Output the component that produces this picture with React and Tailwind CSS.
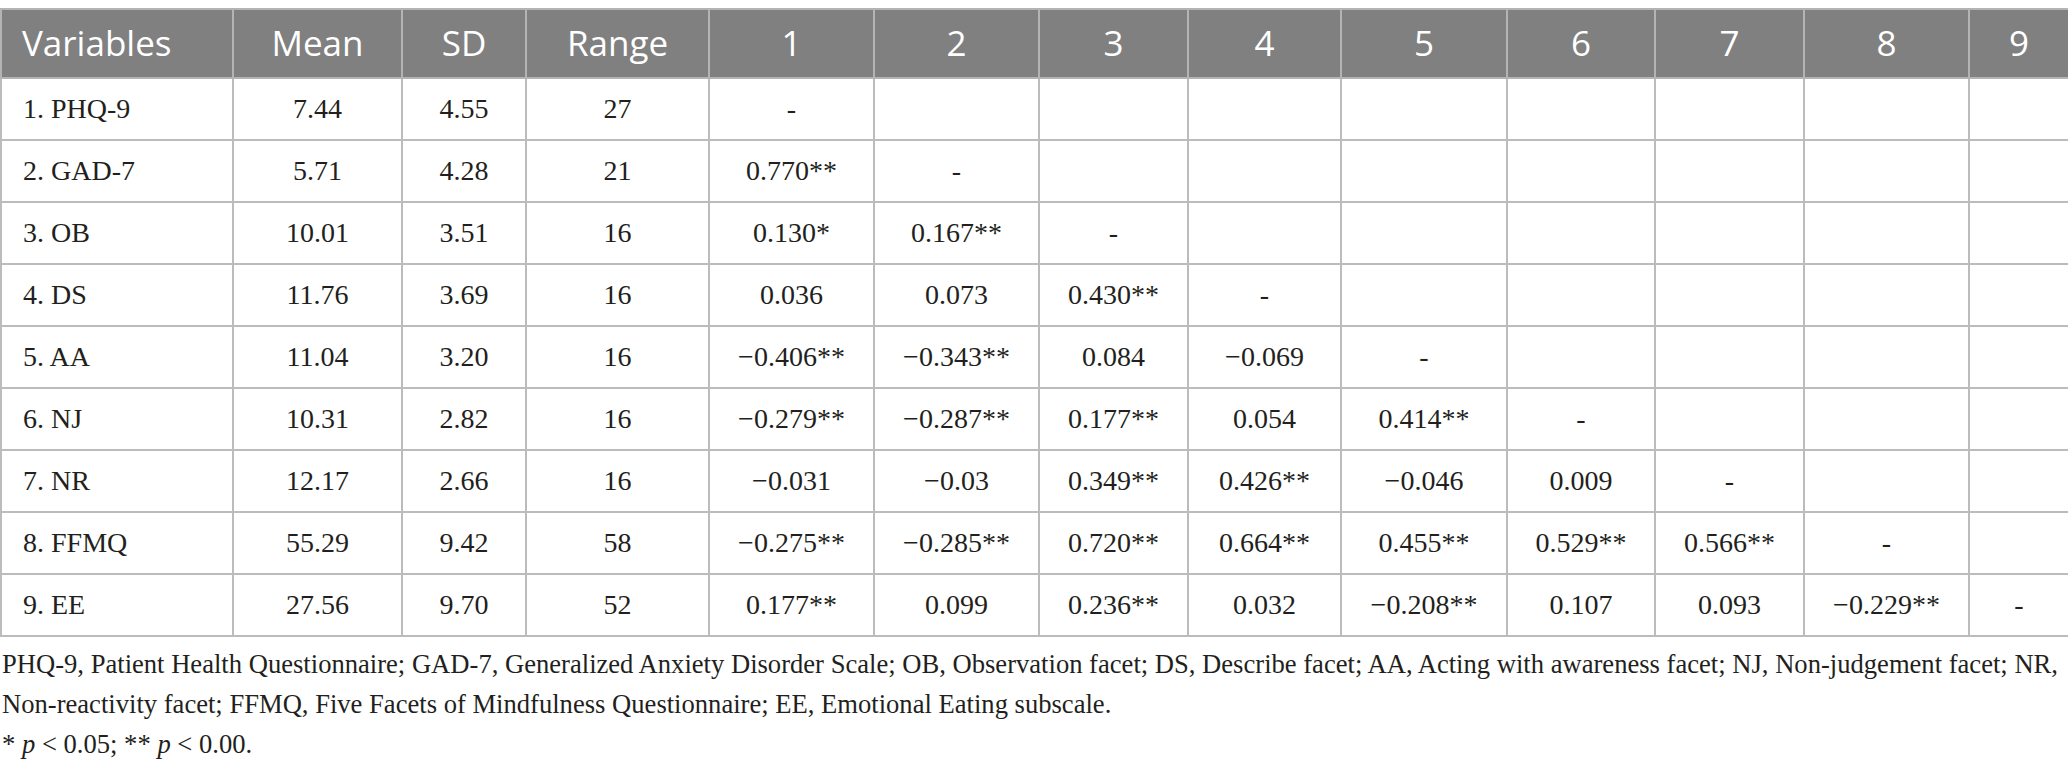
import React from 'react';

const cols = [232, 169, 124, 183, 165, 165, 149, 153, 166, 148, 149, 165, 100];
const heads = ['Variables', 'Mean', 'SD', 'Range', '1', '2', '3', '4', '5', '6', '7', '8', '9'];

const rows = [
  ['1. PHQ-9', '7.44', '4.55', '27', '-'],
  ['2. GAD-7', '5.71', '4.28', '21', '0.770**', '-'],
  ['3. OB', '10.01', '3.51', '16', '0.130*', '0.167**', '-'],
  ['4. DS', '11.76', '3.69', '16', '0.036', '0.073', '0.430**', '-'],
  ['5. AA', '11.04', '3.20', '16', '\u22120.406**', '\u22120.343**', '0.084', '\u22120.069', '-'],
  ['6. NJ', '10.31', '2.82', '16', '\u22120.279**', '\u22120.287**', '0.177**', '0.054', '0.414**', '-'],
  ['7. NR', '12.17', '2.66', '16', '\u22120.031', '\u22120.03', '0.349**', '0.426**', '\u22120.046', '0.009', '-'],
  ['8. FFMQ', '55.29', '9.42', '58', '\u22120.275**', '\u22120.285**', '0.720**', '0.664**', '0.455**', '0.529**', '0.566**', '-'],
  ['9. EE', '27.56', '9.70', '52', '0.177**', '0.099', '0.236**', '0.032', '\u22120.208**', '0.107', '0.093', '\u22120.229**', '-'],
];

export default function App() {
  return (
    <div className="w-[2068px] h-[768px] bg-white pt-[8px] overflow-hidden">
      <table className="w-[2068px] table-fixed border-collapse">
        <colgroup>
          {cols.map((w, i) => (
            <col key={i} style={{ width: w }} />
          ))}
        </colgroup>
        <thead>
          <tr className="h-[69px] bg-[#7f807f]">
            {heads.map((h, i) => (
              <th
                key={h}
                className={`border-2 border-[#b4b4b4] font-normal text-white text-[35px] font-['Open_Sans',sans-serif] ${
                  i === 0 ? 'text-left pl-[20px]' : 'text-center'
                }`}
              >
                {h}
              </th>
            ))}
          </tr>
        </thead>
        <tbody>
          {rows.map((r, ri) => (
            <tr key={ri} className="h-[62px]">
              {cols.map((_, ci) => (
                <td
                  key={ci}
                  className={`border-2 border-[#bcbcbc] text-[28px] text-[#231f20] font-['Liberation_Serif',serif] ${
                    ci === 0 ? 'text-left pl-[21px]' : 'text-center'
                  }`}
                >
                  {r[ci] ?? ''}
                </td>
              ))}
            </tr>
          ))}
        </tbody>
      </table>
      <p className="mt-[7px] pl-[2px] text-[26.6px] leading-[40px] text-[#231f20] font-['Liberation_Serif',serif] whitespace-nowrap">
        PHQ-9, Patient Health Questionnaire; GAD-7, Generalized Anxiety Disorder Scale; OB, Observation facet; DS, Describe facet; AA, Acting with awareness facet; NJ, Non-judgement facet; NR,
        <br />
        Non-reactivity facet; FFMQ, Five Facets of Mindfulness Questionnaire; EE, Emotional Eating subscale.
        <br />* <i>p</i> &lt; 0.05; ** <i>p</i> &lt; 0.00.
      </p>
    </div>
  );
}
